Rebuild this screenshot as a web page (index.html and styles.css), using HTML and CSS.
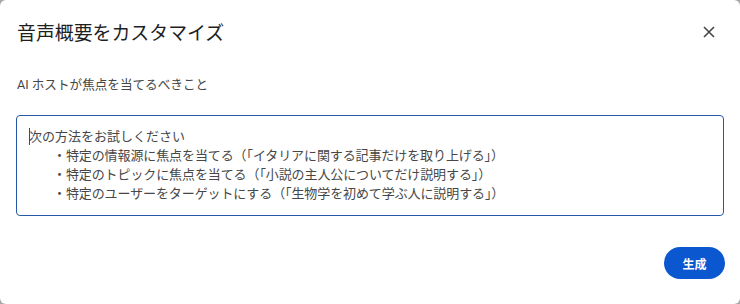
FILE: index.html
```html
<!DOCTYPE html>
<html lang="ja">
<head>
<meta charset="utf-8">
<title>音声概要をカスタマイズ</title>
<link rel="stylesheet" href="styles.css">
</head>
<body>
<div class="dialog">
  <header class="head">
    <h1 class="title">音声概要をカスタマイズ</h1>
    <button class="close" aria-label="閉じる">
      <svg viewBox="0 0 12 12" width="12" height="12"><path d="M1 1L11 11M11 1L1 11" stroke="#444746" stroke-width="1.6" fill="none"/></svg>
    </button>
  </header>
  <p class="label">AI ホストが焦点を当てるべきこと</p>
  <div class="field">
    <div class="line"><span class="caret"></span>次の方法をお試しください</div>
    <div class="line bullet">・特定の情報源に焦点を当てる（「イタリアに関する記事だけを取り上げる」）</div>
    <div class="line bullet">・特定のトピックに焦点を当てる（「小説の主人公についてだけ説明する」）</div>
    <div class="line bullet">・特定のユーザーをターゲットにする（「生物学を初めて学ぶ人に説明する」）</div>
  </div>
  <div class="actions">
    <button class="primary">生成</button>
  </div>
</div>
</body>
</html>
```
FILE: styles.css
```css
html, body {
  margin: 0;
  padding: 0;
  background: #a8a8a8;
}
body {
  font-family: Roboto, "Noto Sans CJK JP", sans-serif;
  width: 740px;
  height: 304px;
  overflow: hidden;
}
.dialog {
  box-sizing: border-box;
  width: 740px;
  height: 304px;
  background: #ffffff;
  border-radius: 6px;
  padding: 18px 16px 0 16px;
  display: flex;
  flex-direction: column;
}
.head {
  display: flex;
  align-items: center;
  justify-content: space-between;
  height: 28px;
}
.title {
  margin: 0 0 0 1px;
  font-family: "Noto Sans CJK JP", sans-serif;
  font-size: 18.9px;
  font-weight: 400;
  line-height: 28px;
  color: #1f1f1f;
}
.close {
  width: 30px;
  height: 28px;
  padding: 0;
  border: none;
  background: transparent;
  display: flex;
  align-items: center;
  justify-content: center;
}
.label {
  margin: 29px 0 0 1px;
  font-size: 12.6px;
  line-height: 20px;
  color: #444746;
}
.field {
  box-sizing: border-box;
  margin-top: 20px;
  height: 101px;
  border: 1px solid #2559a8;
  border-radius: 4px;
  padding: 10px 12px 0 12px;
  font-family: "Noto Sans CJK JP", sans-serif;
  font-size: 13px;
  line-height: 19px;
  color: #474747;
}
.line {
  white-space: nowrap;
}
.bullet {
  padding-left: 24px;
  letter-spacing: -0.1px;
}
.caret {
  display: inline-block;
  width: 1px;
  height: 17px;
  background: #2a4f8f;
  vertical-align: -4px;
  margin-right: -1px;
}
.actions {
  display: flex;
  justify-content: flex-end;
  margin-top: 31px;
  margin-right: -1px;
}
.primary {
  width: 61px;
  height: 32px;
  border: none;
  border-radius: 16px;
  background: #0b57d0;
  color: #ffffff;
  font-family: "Noto Sans CJK JP", sans-serif;
  font-size: 12px;
  font-weight: 700;
  padding: 0;
}
```
